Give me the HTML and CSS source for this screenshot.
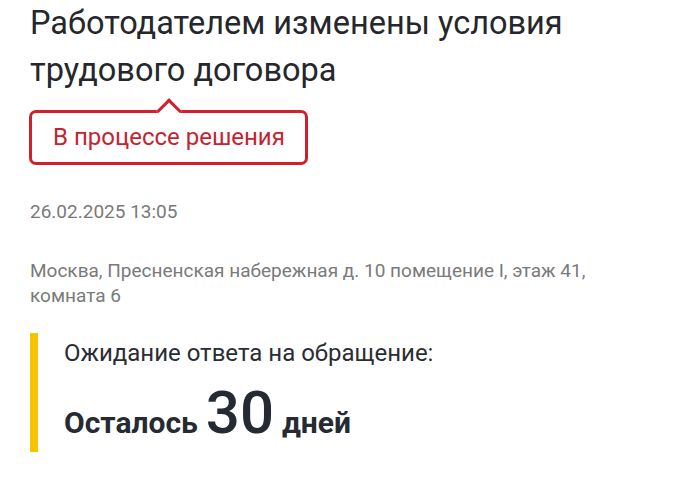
FILE: index.html
```html
<!DOCTYPE html>
<html lang="ru">
<head>
<meta charset="utf-8">
<link rel="stylesheet" href="styles.css">
</head>
<body>
<main class="page">
  <h1 class="title">Работодателем изменены условия трудового договора</h1>
  <div class="status">В процессе решения</div>
  <div class="date">26.02.2025 13:05</div>
  <div class="address">Москва, Пресненская набережная д. 10 помещение I, этаж 41, комната 6</div>
  <section class="waiting">
    <div class="waiting-label">Ожидание ответа на обращение:</div>
    <div class="remaining"><span class="rem-word">Осталось</span><span class="rem-num">30</span><span class="rem-unit">дней</span></div>
  </section>
</main>
</body>
</html>
```
FILE: styles.css
```css
html, body {
  margin: 0;
  padding: 0;
  background: #ffffff;
}
body {
  font-family: Roboto, "Noto Sans", sans-serif;
  color: #24272e;
}
.page {
  padding: 0 30px;
  width: 600px;
}
.title {
  margin: 0;
  font-size: 32.5px;
  font-weight: 400;
  line-height: 47px;
  color: #25272c;
}
.status {
  position: relative;
  display: inline-block;
  margin-top: 16px;
  margin-left: -1px;
  border: 3px solid #d11f2c;
  border-radius: 7px;
  padding: 0 20px 0 21px;
  height: 49px;
  line-height: 48px;
  font-size: 24px;
  color: #c62330;
  background: #fff;
}
.status::before {
  content: "";
  position: absolute;
  top: -11px;
  left: 128px;
  width: 15px;
  height: 15px;
  background: #fff;
  border-top: 3px solid #d11f2c;
  border-left: 3px solid #d11f2c;
  transform: rotate(45deg);
}
.date {
  margin-top: 35px;
  font-size: 19px;
  line-height: 24px;
  color: #7a7a7a;
}
.address {
  margin-top: 34px;
  font-size: 19px;
  line-height: 25px;
  color: #7a7a7a;
}
.waiting {
  margin-top: 25px;
  border-left: 8px solid #f6c400;
  padding-left: 26px;
  height: 119px;
  box-sizing: border-box;
}
.waiting-label {
  font-size: 24px;
  line-height: 28px;
  padding-top: 6px;
  color: #2a2d33;
}
.remaining {
  display: flex;
  align-items: baseline;
  gap: 8px;
  margin-top: 16px;
  color: #262a33;
}
.rem-word, .rem-unit {
  font-size: 30px;
  font-weight: 700;
  line-height: 36px;
}
.rem-num {
  font-size: 60px;
  font-weight: 500;
  line-height: 60px;
}
```
